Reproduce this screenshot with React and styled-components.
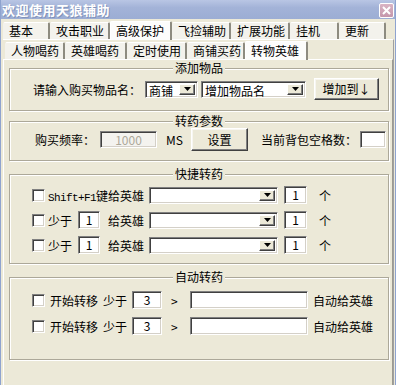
import styled, { createGlobalStyle } from 'styled-components';

const Global = createGlobalStyle`
  html, body {
    margin: 0;
    padding: 0;
    background: #ece9d8;
  }
  body {
    font-family: 'Noto Sans CJK SC', 'Liberation Sans', sans-serif;
    font-size: 12px;
    color: #000;
  }
`;

const Window = styled.div`
  width: 396px;
  height: 385px;
  overflow: hidden;
  box-sizing: border-box;
  background: #ece9d8;
  border-left: 1px solid #8ea3cf;
  border-right: 1px solid #8ea3cf;
  display: flex;
  flex-direction: column;
`;

const TitleBar = styled.div`
  height: 19px;
  flex-shrink: 0;
  display: flex;
  align-items: center;
  justify-content: space-between;
  padding: 0 1px 0 1px;
  background: linear-gradient(#b9c6e4, #a3b3d8 40%, #9cadd4);
`;

const Title = styled.div`
  color: #fff;
  font-weight: bold;
  font-size: 13px;
  letter-spacing: 0.5px;
  line-height: 19px;
  text-shadow: 1px 1px 0 #8293b9;
`;

const CloseBtn = styled.div`
  width: 13px;
  height: 13px;
  margin-top: 1px;
  border: 1px solid #fff;
  border-radius: 2px;
  background: linear-gradient(#d9b4c4, #c496ab);
  display: flex;
  align-items: center;
  justify-content: center;
`;

const TabStrip = styled.div`
  display: flex;
  align-items: flex-end;
  height: ${p => p.$h}px;
  padding-left: ${p => p.$pl}px;
  flex-shrink: 0;
`;

const Tab = styled.div`
  box-sizing: border-box;
  width: ${p => p.$w}px;
  height: ${p => (p.$active ? 19 : 17)}px;
  padding-left: ${p => p.$pl}px;
  line-height: ${p => (p.$active ? 17 : 16)}px;
  white-space: nowrap;
  background: ${p => (p.$active ? '#fcfcfb' : '#f3f2ec')};
  border-top: 1px solid #fff;
  border-left: 1px solid ${p => (p.$active ? '#fff' : '#f3f2ec')};
  border-right: 2px solid #8d8b80;
  border-radius: 2px 2px 0 0;
  margin-bottom: ${p => (p.$active ? -1 : 0)}px;
  position: relative;
`;

const OuterPage = styled.div`
  flex: 1;
  margin: 0 1px 0 2px;
  border-top: 1px solid #fff;
  border-right: 1px solid #a0a0a0;
  display: flex;
  flex-direction: column;
`;

const InnerPage = styled.div`
  flex: 1;
  border-top: 1px solid #fff;
  border-left: 1px solid #fff;
  border-right: 1px solid #9d9b90;
  padding-top: 1px;
`;

const Group = styled.fieldset`
  box-sizing: border-box;
  width: 380px;
  margin: ${p => p.$mt}px 0 0 5px;
  padding: ${p => p.$pt}px 0 ${p => p.$pb}px 0;
  border: 1px solid #aca899;
  box-shadow: 1px 1px 0 #fff, inset 1px 1px 0 #fff;
  min-width: 0;
`;

const Legend = styled.legend`
  margin: 0 auto;
  padding: 0 2px;
  line-height: 14px;
  background: #ece9d8;
`;

const Row = styled.div`
  display: flex;
  align-items: center;
  height: ${p => p.$h}px;
  margin-top: ${p => p.$mt || 0}px;
  white-space: nowrap;
`;

const Text = styled.span`
  flex-shrink: 0;
  margin-left: ${p => p.$ml || 0}px;
  width: ${p => (p.$w ? `${p.$w}px` : 'auto')};
  color: ${p => p.$color || '#000'};
`;

const Mono = styled.span`
  font-family: 'Liberation Mono', monospace;
  font-size: 11px;
  letter-spacing: -0.6px;
`;

const sunken = `
  box-sizing: border-box;
  background: #fff;
  border: 1px solid;
  border-color: #808080 #fff #fff #808080;
  box-shadow: inset 1px 1px 0 #404040, inset -1px -1px 0 #d4d0c8;
`;

const Field = styled.div`
  ${sunken}
  flex-shrink: 0;
  width: ${p => p.$w}px;
  height: ${p => p.$h || 18}px;
  margin-left: ${p => p.$ml || 0}px;
  background: ${p => (p.$disabled ? '#f4f3ef' : '#fff')};
  color: ${p => (p.$disabled ? '#aca899' : '#000')};
  text-align: center;
  line-height: ${p => (p.$h || 18) - 2}px;
`;

const Combo = styled.div`
  ${sunken}
  flex-shrink: 0;
  width: ${p => p.$w}px;
  height: 17px;
  margin-left: ${p => p.$ml || 0}px;
  display: flex;
  align-items: stretch;
  padding: 2px;
`;

const ComboText = styled.div`
  flex: 1;
  line-height: 13px;
  padding-left: 1px;
`;

const DropBtn = styled.div`
  box-sizing: border-box;
  width: 16px;
  background: #ece9d8;
  border: 1px solid;
  border-color: #fff #404040 #404040 #fff;
  box-shadow: inset -1px -1px 0 #808080;
  display: flex;
  align-items: center;
  justify-content: center;
`;

const Button = styled.div`
  box-sizing: border-box;
  flex-shrink: 0;
  width: ${p => p.$w}px;
  height: ${p => p.$h}px;
  margin-left: ${p => p.$ml || 0}px;
  background: #ece9d8;
  border: 1px solid;
  border-color: #fff #404040 #404040 #fff;
  box-shadow: inset -1px -1px 0 #808080, inset 1px 1px 0 #f7f6f1;
  text-align: center;
  line-height: ${p => p.$h - 2}px;
`;

const Check = styled.div`
  ${sunken}
  flex-shrink: 0;
  width: 13px;
  height: 13px;
  margin-left: ${p => p.$ml || 0}px;
`;

const Arrow = () => (
  <svg width="7" height="4" viewBox="0 0 7 4">
    <path d="M0 0h7L3.5 4z" fill="#000" />
  </svg>
);

const DropCombo = ({ w, ml, children }) => (
  <Combo $w={w} $ml={ml}>
    <ComboText>{children}</ComboText>
    <DropBtn>
      <Arrow />
    </DropBtn>
  </Combo>
);

const outerTabs = [
  { label: '基本', w: 47 },
  { label: '攻击职业', w: 60 },
  { label: '高级保护', w: 62, active: true },
  { label: '飞捡辅助', w: 59 },
  { label: '扩展功能', w: 59 },
  { label: '挂机', w: 49 },
  { label: '更新', w: 47 },
];

const innerTabs = [
  { label: '人物喝药', w: 60 },
  { label: '英雄喝药', w: 62 },
  { label: '定时使用', w: 60 },
  { label: '商铺买药', w: 58 },
  { label: '转物英雄', w: 63, active: true },
];

const QuickRow = ({ first, mt }) => (
  <Row $h={18} $mt={mt}>
    <Check $ml={22} />
    {first ? (
      <Text $ml={3}>
        <Mono>Shift+F1</Mono>键给英雄
      </Text>
    ) : (
      <>
        <Text $ml={3}>少于</Text>
        <Field $w={22} $ml={6}>1</Field>
        <Text $ml={8}>给英雄</Text>
      </>
    )}
    <DropCombo w={129} ml={5} />
    <Field $w={23} $ml={6}>1</Field>
    <Text $ml={12}>个</Text>
  </Row>
);

const AutoRow = ({ mt }) => (
  <Row $h={18} $mt={mt}>
    <Check $ml={22} />
    <Text $ml={5}>开始转移</Text>
    <Text $ml={5}>少于</Text>
    <Field $w={30} $ml={5}>3</Field>
    <Text $ml={9} $w={8}>&gt;</Text>
    <Field $w={118} $ml={11} />
    <Text $ml={5}>自动给英雄</Text>
  </Row>
);

export default function App() {
  return (
    <>
      <Global />
      <Window>
        <TitleBar>
          <Title>欢迎使用天狼辅助</Title>
          <CloseBtn>
            <svg width="9" height="9" viewBox="0 0 9 9">
              <path d="M1 1l7 7M8 1l-7 7" stroke="#fff" strokeWidth="2" />
            </svg>
          </CloseBtn>
        </TitleBar>
        <TabStrip $h={20} $pl={2}>
          {outerTabs.map(t => (
            <Tab key={t.label} $w={t.w} $pl={5} $active={t.active}>
              {t.label}
            </Tab>
          ))}
        </TabStrip>
        <OuterPage>
          <TabStrip $h={19} $pl={2}>
            {innerTabs.map(t => (
              <Tab key={t.label} $w={t.w} $pl={5} $active={t.active}>
                {t.label}
              </Tab>
            ))}
          </TabStrip>
          <InnerPage>
            <Group $mt={0} $pt={3} $pb={10}>
              <Legend>添加物品</Legend>
              <Row $h={22}>
                <Text $ml={23}>请输入购买物品名：</Text>
                <DropCombo w={53} ml={4}>商铺</DropCombo>
                <DropCombo w={105} ml={3}>增加物品名</DropCombo>
                <Button $w={65} $h={22} $ml={8}>增加到↓</Button>
              </Row>
            </Group>
            <Group $mt={3} $pt={0} $pb={9}>
              <Legend>转药参数</Legend>
              <Row $h={23}>
                <Text $ml={25}>购买频率：</Text>
                <Field $w={57} $h={17} $ml={5} $disabled>1000</Field>
                <Text $ml={9}>MS</Text>
                <Button $w={57} $h={23} $ml={8}>设置</Button>
                <Text $ml={13}>当前背包空格数：</Text>
                <Field $w={26} $h={17} $ml={3} />
              </Row>
            </Group>
            <Group $mt={6} $pt={5} $pb={9}>
              <Legend>快捷转药</Legend>
              <QuickRow first />
              <QuickRow mt={7} />
              <QuickRow mt={7} />
            </Group>
            <Group $mt={6} $pt={7} $pb={24}>
              <Legend>自动转药</Legend>
              <AutoRow />
              <AutoRow mt={8} />
            </Group>
          </InnerPage>
        </OuterPage>
      </Window>
    </>
  );
}
